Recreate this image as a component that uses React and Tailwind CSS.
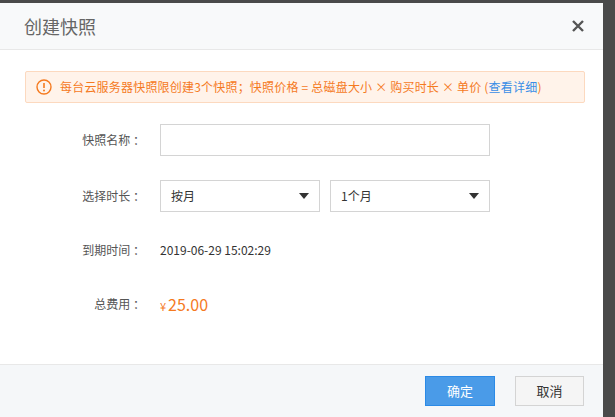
import React from 'react';

const font = { fontFamily: '"Noto Sans CJK SC", "Noto Sans", sans-serif' };

const Caret = () => (
  <svg width="10" height="6" viewBox="0 0 10 6"><path d="M0 0h10L5 6z" fill="#333" /></svg>
);

export default function App() {
  return (
    <div className="w-[615px] h-[417px] bg-[#4a4a4a] overflow-hidden flex flex-col" style={font}>
      <div className="h-[3px] shrink-0" />
      <div className="w-[603px] flex-1 bg-white flex flex-col">
        <div className="h-[47px] bg-[#f8f9fa] border-b border-[#e8e8e8] flex items-center justify-between pl-[24px] pr-[18px]">
          <span className="text-[18px] text-[#666]">创建快照</span>
          <svg width="14" height="14" viewBox="0 0 14 14"><path d="M2 2l10 10M12 2L2 12" stroke="#555" strokeWidth="2.4" /></svg>
        </div>
        <div className="flex-1 px-[25px] pt-[21px]">
          <div className="h-[32px] bg-[#fff3ea] border border-[#fcd9bf] rounded-[2px] flex items-center px-[10px] gap-[8px] text-[12px] text-[#f57a1f] w-[560px]">
            <svg width="16" height="16" viewBox="0 0 16 16"><circle cx="8" cy="8" r="7" fill="none" stroke="#f57a1f" strokeWidth="1.4" /><path d="M8 4v5" stroke="#f57a1f" strokeWidth="1.6" /><circle cx="8" cy="11.5" r="1" fill="#f57a1f" /></svg>
            <span className="tracking-[0.2px]">每台云服务器快照限创建3个快照；快照价格 = 总磁盘大小 × 购买时长 × 单价 (<span className="text-[#3a8ee6]">查看详细</span>)</span>
          </div>
          <div className="mt-[21px] flex flex-col text-[12px] text-[#555]">
            <div className="flex items-center h-[32px]">
              <span className="w-[120px] text-right">快照名称 ：</span>
              <div className="ml-[15px] w-[330px] h-[32px] border border-[#d4d4d4]" />
            </div>
            <div className="flex items-center h-[32px] mt-[24px]">
              <span className="w-[120px] text-right">选择时长 ：</span>
              <div className="ml-[15px] w-[160px] h-[32px] border border-[#d4d4d4] flex items-center justify-between px-[10px] text-[#333]">按月<Caret /></div>
              <div className="ml-[10px] w-[160px] h-[32px] border border-[#d4d4d4] flex items-center justify-between px-[10px] text-[#333]">1个月<Caret /></div>
            </div>
            <div className="flex items-center h-[32px] mt-[22px]">
              <span className="w-[120px] text-right">到期时间 ：</span>
              <span className="ml-[15px] text-[#333]">2019-06-29 15:02:29</span>
            </div>
            <div className="flex items-center h-[32px] mt-[22px]">
              <span className="w-[120px] text-right">总费用 ：</span>
              <span className="ml-[15px] text-[#f57a1f]"><span className="text-[11px] mr-[2px]">¥</span><span className="text-[16px]">25.00</span></span>
            </div>
          </div>
        </div>
        <div className="h-[53px] bg-[#f5f7f9] border-t border-[#e8e8e8] flex items-center justify-end gap-[20px] pr-[19px]">
          <div className="w-[70px] h-[30px] bg-[#4a9be8] border border-[#2b8ae6] text-white text-[13px] flex items-center justify-center">确定</div>
          <div className="w-[69px] h-[30px] bg-[#f5f5f5] border border-[#d4d4d4] text-[#333] text-[13px] flex items-center justify-center">取消</div>
        </div>
      </div>
    </div>
  );
}
